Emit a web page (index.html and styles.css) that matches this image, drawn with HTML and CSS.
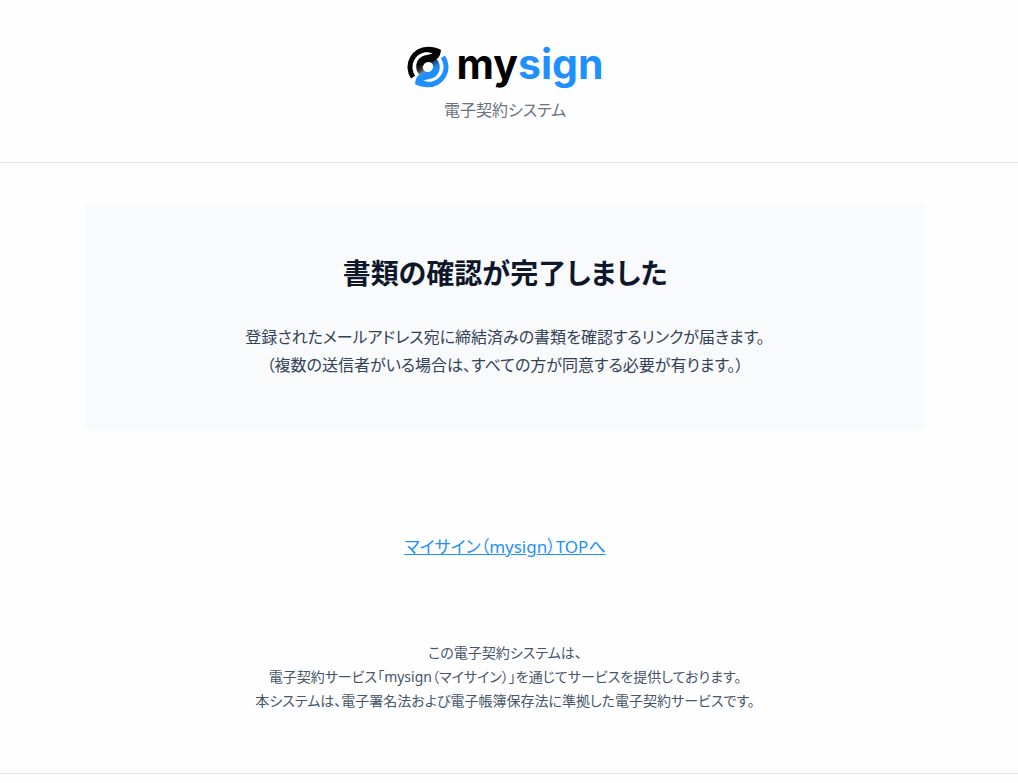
FILE: index.html
```html
<!DOCTYPE html>
<html lang="ja">
<head>
  <meta charset="UTF-8">
  <meta name="viewport" content="width=device-width, initial-scale=1.0">
  <title>電子契約システム | mysign</title>
  <link rel="stylesheet" href="styles.css">
</head>
<body>
  <header class="header">
    <div class="logo">
      <svg class="logo-mark" viewBox="-62 -62 124 124" aria-hidden="true">
        <defs>
          <linearGradient id="ink" gradientUnits="userSpaceOnUse" x1="-30" y1="-10" x2="-10" y2="24">
            <stop offset="0" stop-color="#000"/>
            <stop offset="0.5" stop-color="#333"/>
            <stop offset="1" stop-color="#ccc"/>
          </linearGradient>
          <linearGradient id="sky" gradientUnits="userSpaceOnUse" x1="30" y1="10" x2="10" y2="-24">
            <stop offset="0" stop-color="#1e90ff"/>
            <stop offset="0.4" stop-color="#1f7fe0"/>
            <stop offset="1" stop-color="#06121f"/>
          </linearGradient>
        </defs>
        <path fill="url(#ink)" d="M-6 -14A15 15 0 0 0 -6 14L-18 28L-28 20A34 34 0 0 1 -10 -33Z"/>
        <path fill="url(#sky)" d="M6 14A15 15 0 0 0 6 -14L18 -28L28 -20A34 34 0 0 1 10 33Z"/>
        <path fill="#000" d="M-50 34A60 60 0 0 1 0 -60C14 -60 27 -57 38 -51C38 -34 30 -20 6 -14A15 15 0 0 0 -14 -4L-34 -6A34 34 0 0 1 -10 -34C0 -37 6 -37 14 -40C4 -44 -4 -44 -12 -43A45 45 0 0 0 -38 26Z"/>
        <path fill="#1e90ff" d="M50 -34A60 60 0 0 1 0 60C-14 60 -27 57 -38 51C-38 34 -30 20 -6 14A15 15 0 0 0 14 4L34 6A34 34 0 0 1 10 34C0 37 -6 37 -14 40C-4 44 4 44 12 43A45 45 0 0 0 38 -26Z"/>
      </svg>
      <span class="logo-text">my<span class="logo-accent">sign</span></span>
    </div>
    <p class="tagline">電子契約システム</p>
  </header>

  <main class="main">
    <section class="message">
      <h1>書類の確認が完了しました</h1>
      <p>登録されたメールアドレス宛に締結済みの書類を確認するリンクが届きます。<br>（複数の送信者がいる場合は、すべての方が同意する必要が有ります。）</p>
    </section>
    <a class="top-link" href="#">マイサイン（mysign）TOPへ</a>
    <p class="note">この電子契約システムは、<br>電子契約サービス「mysign（マイサイン）」を通じてサービスを提供しております。<br>本システムは、電子署名法および電子帳簿保存法に準拠した電子契約サービスです。</p>
  </main>
</body>
</html>
```

FILE: styles.css
```css
* {
  box-sizing: border-box;
}

body {
  margin: 0;
  background-color: #fefefe;
  color: #334155;
  font-family: "Noto Sans", "Noto Sans CJK JP", sans-serif;
  font-feature-settings: "palt";
  font-size: 16px;
  line-height: 28px;
  text-align: center;
}

h1,
p {
  margin: 0;
}

.header {
  padding: 46px 8px 38px 0;
  border-bottom: 1px solid #e5e5e5;
}

.logo {
  display: flex;
  justify-content: center;
  align-items: flex-start;
  gap: 8px;
  height: 42px;
  margin-bottom: 8px;
}

.logo-mark {
  width: 42px;
  height: 42px;
}

.logo-text {
  color: #000;
  font-family: Inter, sans-serif;
  font-size: 41px;
  font-weight: 700;
  line-height: 36px;
}

.logo-accent {
  color: #1e90ff;
}

.tagline {
  color: #6b7280;
}

.main {
  display: flex;
  flex-direction: column;
  align-items: center;
  padding: 40px 8px 60px 0;
  border-bottom: 1px solid #e5e5e5;
}

.message {
  width: 84%;
  max-width: 840px;
  padding: 50px 20px 51px;
  background-color: #f8fafc;
}

.message h1 {
  margin-bottom: 30px;
  color: #0f172a;
  font-size: 28px;
  font-weight: 600;
  line-height: 40px;
}

.top-link {
  margin: 103px 0 80px;
  color: #1e90ff;
  font-size: 17px;
}

.note {
  color: #475569;
  font-size: 14px;
  line-height: 24px;
}
```
